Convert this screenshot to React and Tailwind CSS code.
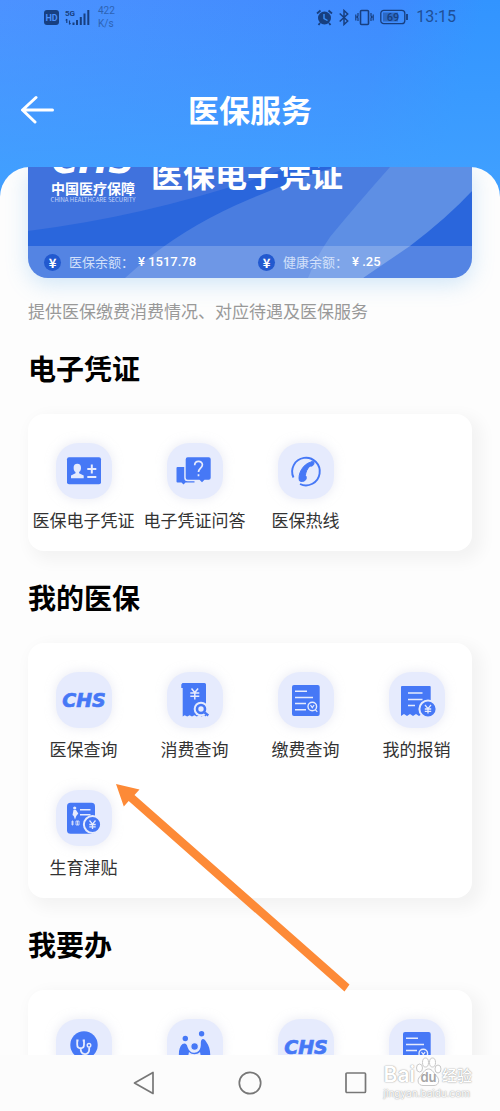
import React from "react";

const BLUE = "#4678f6";
const PALE = "#e6ebfd";

function Chs() {
  return (
    <text x="28" y="35" textAnchor="middle" fontSize="19" fontWeight="700" fontStyle="italic" fontFamily="DejaVu Sans" fill={BLUE} stroke={BLUE} strokeWidth=".7">CHS</text>
  );
}

function Coin({ cx, cy }) {
  return (
    <>
      <circle cx={cx} cy={cy} r="8.6" fill={BLUE} stroke={PALE} strokeWidth="2" />
      <path d={`M${cx - 3} ${cy - 4}l3 3.6l3-3.6M${cx} ${cy - 0.4}v5M${cx - 3.2} ${cy}h6.4M${cx - 3.2} ${cy + 2.4}h6.4`} stroke={PALE} strokeWidth="1.3" fill="none" />
    </>
  );
}

const icons = {
  idcard: (
    <>
      <rect x="11" y="14.3" width="34" height="27" rx="2" fill={BLUE} />
      <ellipse cx="21.3" cy="25" rx="3.7" ry="4.2" fill={PALE} />
      <path d="M19.5 27h3.6v3.2l4.6 2.3v2.7H15v-2.7l4.5-2.3z" fill={PALE} />
      <path d="M31.3 26h9M35.8 21.6v8.8M31.3 34h9" stroke={PALE} strokeWidth="2" />
    </>
  ),
  question: (
    <>
      <path d="M10.500 24h10v13.500h7v2h-9l-2 2-2-2h-4a1 1 0 0 1-1-1V25a1 1 0 0 1 1-1z" fill={BLUE} />
      <path d="M20.700 14.300h21a2 2 0 0 1 2 2v18.400a2 2 0 0 1-2 2h-4.200l-2.500 2.500-2.500-2.500H20.700a2 2 0 0 1-2-2V16.300a2 2 0 0 1 2-2z" fill={BLUE} stroke={PALE} strokeWidth="3" paintOrder="stroke" />
      <path d="M27.700 22.300c0-5.200 7.700-5 7.700-.6 0 3.400-3.900 3.300-3.900 7.300M31.500 31.200v2" stroke={PALE} strokeWidth="1.700" fill="none" />
    </>
  ),
  phone: (
    <>
      <path d="M15.500 34.500A13.800 13.800 0 1 1 22 41" stroke={BLUE} strokeWidth="1.900" fill="none" />
      <path d="M32.500 19.200c1.500-1.800 3.900-1.100 3.500 1.200-.3 2-2.200 3.300-4 2.600-2.800 2.700-4.300 6-4.600 9.600 1.200.9 1.200 3 .2 4.300-1.500 1.700-4.900 2.200-6.200.8-1.900-6.500 3.500-16.500 11.100-18.500z" fill={BLUE} stroke={BLUE} strokeWidth="1" strokeLinejoin="round" />
    </>
  ),
  chs: <Chs />,
  receipt: (
    <>
      <path d="M15.500 11h22a1.500 1.500 0 0 1 1.500 1.500V44.500l-2-1.300-2.400 1.300-2.400-1.300-2.400 1.300-2.400-1.300-2.400 1.300-2.400-1.300-2.400 1.300-2.500-1.300-2 1.300V16H14.300v-3.500z" fill={BLUE} />
      <path d="M24.500 16.500l3.300 4 3.300-4M27.800 20.500v7M23.300 21h9M23.300 24.300h9" stroke={PALE} strokeWidth="1.500" fill="none" />
      <circle cx="34" cy="37" r="7.300" fill={PALE} />
      <circle cx="34" cy="37" r="4" fill="none" stroke={BLUE} strokeWidth="2.600" />
      <path d="M37.500 40.500l3.800 3" stroke={BLUE} strokeWidth="2.400" />
    </>
  ),
  bill: (
    <>
      <rect x="14" y="13" width="27.700" height="31" rx="2" fill={BLUE} />
      <path d="M17 19.300h12M17 25.500h18M17 31.500h11M17 37.700h11" stroke={PALE} strokeWidth="1.400" />
      <circle cx="34.300" cy="34.500" r="4.300" fill="none" stroke={PALE} strokeWidth="1.400" />
      <path d="M32.500 33l1.800 2.600 1.800-2.600M37.300 37.600l2 2.200" stroke={PALE} strokeWidth="1.200" fill="none" />
    </>
  ),
  refund: (
    <>
      <path d="M16 14h24.700a1 1 0 0 1 1 1v29l-2.700-2-3 2-3-2-3 2-3-2-3 2-3-2-3 2-3-2-3 2V15a1 1 0 0 1 1-1z" fill={BLUE} />
      <path d="M19 21h14.500M19 27.500h14.500M19 33.500h7" stroke={PALE} strokeWidth="1.700" />
      <Coin cx={39} cy={37} />
    </>
  ),
  allowance: (
    <>
      <rect x="11" y="12.700" width="28" height="31" rx="3.500" fill={BLUE} />
      <circle cx="18.700" cy="18" r="1.600" fill={PALE} />
      <path d="M17.500 20h2.500l2.300 3.500-2 2.500-1.300 3.500-1.300-3.500-1.200-1z" fill={PALE} />
      <path d="M24 19.800h10.500M24 24.700h10.500" stroke={PALE} strokeWidth="1.500" />
      <path d="M15 32h3M16.500 30.500v5M15 34h3M20 31h3v4h-3zM21.500 31v4" stroke={PALE} strokeWidth=".8" fill="none" />
      <Coin cx={36.500} cy={34.500} />
    </>
  ),
  doctor: (
    <>
      <circle cx="28" cy="26" r="13.700" fill={BLUE} />
      <path d="M22.500 21.500h-1.300v4c0 5 6.800 5 6.800 0v-4h-1.300M24.600 29.300c0 8 8.600 7 8.600 1.500v-2.500" stroke={PALE} strokeWidth="1.800" fill="none" />
      <circle cx="33" cy="26.300" r="1.800" fill="none" stroke={PALE} strokeWidth="1.400" />
    </>
  ),
  family: (
    <>
      <circle cx="18.300" cy="19.500" r="2.700" fill={BLUE} />
      <circle cx="34.600" cy="14.700" r="2.700" fill={BLUE} />
      <path d="M15.500 25c2.500-1.500 4.500 0 5 3 1.500 4.500 4.500 6.500 8 5.500 4-1 5.500-4 5.300-9.500 0-5 3.500-5 5.500-1 3 4 4 8 4 15H34l-1-5c-3 3-8 3-11 0l-1 5h-9c-.500-6 .500-10.500 3.500-13z" fill={BLUE} />
      <circle cx="27.600" cy="27.500" r="3.800" fill={BLUE} stroke={PALE} strokeWidth="1.200" />
    </>
  ),
};

function Tile({ icon, label, name }) {
  return (
    <button type="button" aria-label={name} className="flex flex-col items-center">
      <span className="size-14 rounded-[22px] bg-[#e6ebfd] shadow-[0_0_8px_2px_rgba(225,228,240,0.5)]">
        <svg viewBox="0 0 56 56" className="size-14" aria-hidden="true">{icons[icon]}</svg>
      </span>
      <span className="mt-[9px] h-6 text-[17px] leading-6 whitespace-nowrap text-[#333]">{label}</span>
    </button>
  );
}

function Section({ title, tiles, children }) {
  return (
    <section className="relative">
      <h2 className="mt-7 mb-7 text-[28px] leading-9 font-bold text-black">{title}</h2>
      <div className="grid grid-cols-4 gap-y-[29px] rounded-2xl bg-white pt-[29px] pb-[19px] shadow-[6px_6px_16px_4px_rgba(0,0,0,0.045)]">
        {tiles.map((t, i) => <Tile key={i} {...t} />)}
      </div>
      {children}
    </section>
  );
}

function StatusBar() {
  return (
    <div className="flex h-[34px] items-center justify-between pr-11 pl-11 text-[#173f80]">
      <div className="flex items-center gap-1.5">
        <svg viewBox="0 0 15 15" className="size-[15px]" aria-hidden="true">
          <rect width="15" height="15" rx="3" fill="currentColor" />
          <text x="7.500" y="11" textAnchor="middle" fontSize="9" fontWeight="700" fontFamily="Roboto" fill="#4a90fb">HD</text>
        </svg>
        <svg viewBox="0 0 25 17" className="h-[17px] w-[25px]" aria-hidden="true">
          <text x="0" y="7" fontSize="8" fontWeight="700" fontFamily="Roboto" fill="currentColor">5G</text>
          <path d="M1.800 10v4M4.500 11.500v4M.8 11.500l1-1.500M5.500 14l-1 1.500" stroke="currentColor" strokeWidth="1.200" fill="none" />
          <path d="M8.500 13.500V16M12 11v5M15.800 8v8M19.500 4.500V16M23.300 1v15" stroke="currentColor" strokeWidth="2" />
        </svg>
        <div className="ml-0.5 font-[Roboto] text-[10px] leading-[13px] text-[#2d63b4]">
          <div>422</div>
          <div>K/s</div>
        </div>
      </div>
      <div className="flex items-center gap-1.5">
        <svg viewBox="0 0 17 17" className="size-[17px]" aria-hidden="true">
          <circle cx="8.500" cy="9" r="6.500" fill="currentColor" />
          <path d="M1 4.500L4.500 1.500M16 4.500L12.500 1.500M4 14l-1.500 2M13 14l1.500 2" stroke="currentColor" strokeWidth="1.800" />
          <path d="M8 5v4.500l3.500 2" stroke="#3a92fb" strokeWidth="1.400" fill="none" />
        </svg>
        <svg viewBox="0 0 10 17" className="h-[17px] w-2.5" aria-hidden="true">
          <path d="M.7 4.500l8 7.500L5 15.500v-14L8.700 5 .7 12.500" stroke="currentColor" strokeWidth="1.500" fill="none" />
        </svg>
        <svg viewBox="0 0 19 17" className="h-[17px] w-[19px]" aria-hidden="true">
          <rect x="5.500" y="1.500" width="8" height="14" rx="1" stroke="currentColor" strokeWidth="1.600" fill="none" />
          <path d="M3 4v3l-1 1 1 1v3M.8 5.500v6M16 4v3l1 1-1 1v3M18.200 5.500v6" stroke="currentColor" strokeWidth="1.200" fill="none" />
        </svg>
        <svg viewBox="0 0 28 16" className="h-4 w-7" aria-hidden="true">
          <rect x=".8" y="1.300" width="24" height="13.400" rx="3" stroke="currentColor" strokeWidth="1.300" fill="none" />
          <rect x="3" y="3.500" width="15" height="9" fill="currentColor" opacity=".45" />
          <path d="M27 5v6" stroke="currentColor" strokeWidth="1.800" />
          <text x="13" y="12" textAnchor="middle" fontSize="11" fontFamily="Roboto" fontWeight="500" fill="currentColor">69</text>
        </svg>
        <time className="ml-0.5 font-[Roboto] text-base leading-5 text-[#1f4f96]">13:15</time>
      </div>
    </div>
  );
}

function Balance({ label, value }) {
  return (
    <div className="flex w-[214px] items-center">
      <span className="mr-2 flex size-[17px] items-center justify-center rounded-full bg-[#2259cf] text-[13px] leading-none font-bold text-white">¥</span>
      <span className="text-[13px] text-[#d3e0fa]">{label}</span>
      <span className="ml-1 font-[Roboto,'Noto_Sans_CJK_SC'] text-[13px] font-medium text-white">¥ {value}</span>
    </div>
  );
}

function InsuranceCard() {
  return (
    <div className="relative overflow-hidden rounded-b-[20px] bg-[#2a66dc] text-white">
      <svg viewBox="0 0 444 111" preserveAspectRatio="none" className="absolute inset-0 size-full" aria-hidden="true">
        <path d="M0 0H262Q130 48 0 64z" fill="#4072dd" />
        <path d="M97 111Q150 62 222 32T310 0H444V24L335 111z" fill="#4a7de0" />
        <path d="M362 0Q330 36 302 70Q287 92 280 111H335Q360 94 382 79Q420 50 444 24V0z" fill="#5e8fe4" />
      </svg>
      <div className="relative -mt-6 flex h-[103px] pl-6">
        <div className="flex w-[82px] flex-col items-center">
          <span className="font-['DejaVu_Sans'] text-[36px] leading-9 font-bold italic">CHS</span>
          <span className="text-[14px] leading-[18px] font-bold whitespace-nowrap">中国医疗保障</span>
          <span className="text-[6px] leading-[6px] whitespace-nowrap text-[#c5d6f8]">CHINA HEALTHCARE SECURITY</span>
        </div>
        <span className="ml-[17px] text-[32px] leading-[60px] font-bold whitespace-nowrap">医保电子凭证</span>
      </div>
      <div className="relative flex h-8 items-center bg-white/20 pl-4">
        <Balance label="医保余额：" value="1517.78" />
        <Balance label="健康余额：" value=".25" />
      </div>
    </div>
  );
}

function Arrow() {
  return (
    <svg viewBox="116 784 234 208" className="pointer-events-none absolute top-[205px] left-[88px] z-10 h-[208px] w-[234px]" aria-hidden="true">
      <path d="M116 784L139.500 789.500L134.500 795L349.500 984.500L344.500 991.500L128.700 801L123.800 806.500z" fill="#fd8a37" />
    </svg>
  );
}

function Watermark() {
  return (
    <div className="pointer-events-none absolute right-7 bottom-3 z-20 flex flex-col text-white [text-shadow:0_0_1px_#999,0_0_2px_#bbb]">
      <div className="flex h-[30px] items-end">
        <span className="font-[Inter] text-[21px] leading-6 font-semibold">Bai</span>
        <span className="relative flex h-[30px] w-[27px] items-end justify-center">
          <svg viewBox="0 0 27 30" className="absolute inset-0 size-full" aria-hidden="true">
            <g fill="#fff" stroke="#c8c8c8" strokeWidth="1">
              <ellipse cx="4.500" cy="11" rx="3" ry="4" />
              <ellipse cx="10.500" cy="5.500" rx="3" ry="4.500" />
              <ellipse cx="17.500" cy="5.500" rx="3" ry="4.500" />
              <ellipse cx="23" cy="12" rx="3" ry="4" />
              <path d="M13.500 12c4 0 5 4 8 7 4 4 2 9.500-2.500 9.500H8C3 28.500 1.500 23 5 19.500c3-3 4.500-7.500 8.500-7.500z" />
            </g>
          </svg>
          <span className="relative font-[Inter] text-[13px] leading-5 font-semibold text-[#a5a5a5] [text-shadow:none]">du</span>
        </span>
        <span className="text-[15px] leading-6 font-medium">经验</span>
      </div>
      <span className="font-[Inter] text-[10px] leading-3">jingyan.baidu.com</span>
    </div>
  );
}

export default function App() {
  return (
    <div className="relative flex h-screen flex-col overflow-hidden bg-[#fdfdfd] font-['Noto_Sans_CJK_SC',sans-serif]">
      <div className="flex min-h-0 flex-1 flex-col bg-[linear-gradient(180deg,rgba(64,160,255,0)_0,rgba(64,160,255,0.9)_170px),linear-gradient(105deg,#4c92ff_0%,#3f8afe_50%,#3294ff_62%,#3294ff_100%)]">
        <StatusBar />
        <header className="grid h-[133px] grid-cols-[80px_1fr_80px] items-center pt-4 text-white">
          <button type="button" aria-label="返回" className="flex pl-5">
            <svg viewBox="0 0 34 30" className="h-[30px] w-[34px]" aria-hidden="true">
              <path d="M32.500 16H3M16 3.500L2.500 16L15 28" fill="none" stroke="currentColor" strokeWidth="3" strokeLinecap="round" strokeLinejoin="round" />
            </svg>
          </button>
          <h1 className="text-center text-[31px] leading-10 font-bold">医保服务</h1>
        </header>
        <main className="min-h-0 flex-1 overflow-hidden rounded-t-[30px] bg-[#fdfdfd] px-7">
          <div className="rounded-b-[20px] shadow-[0_6px_22px_rgba(90,170,235,0.28)]">
            <InsuranceCard />
          </div>
          <p className="mt-[22px] text-[17px] leading-[22px] whitespace-nowrap text-[#999]">提供医保缴费消费情况、对应待遇及医保服务</p>
          <Section
            title="电子凭证"
            tiles={[
              { icon: "idcard", label: "医保电子凭证" },
              { icon: "question", label: "电子凭证问答" },
              { icon: "phone", label: "医保热线" },
            ]}
          />
          <Section
            title="我的医保"
            tiles={[
              { icon: "chs", label: "医保查询" },
              { icon: "receipt", label: "消费查询" },
              { icon: "bill", label: "缴费查询" },
              { icon: "refund", label: "我的报销" },
              { icon: "allowance", label: "生育津贴" },
            ]}
          >
            <Arrow />
          </Section>
          <Section
            title="我要办"
            tiles={[
              { icon: "doctor", name: "就医" },
              { icon: "family", name: "家庭" },
              { icon: "chs", name: "医保" },
              { icon: "bill", name: "账单" },
            ]}
          />
        </main>
      </div>
      <nav className="flex h-14 shrink-0 items-center justify-center gap-[82px] bg-[#fcfcfc] text-[#777]">
        <button type="button" aria-label="返回上一页">
          <svg viewBox="0 0 24 24" className="size-6" aria-hidden="true"><path d="M21 1.500v21L2.500 12z" fill="none" stroke="currentColor" strokeWidth="1.700" strokeLinejoin="round" /></svg>
        </button>
        <button type="button" aria-label="主页">
          <svg viewBox="0 0 24 24" className="size-6" aria-hidden="true"><circle cx="12" cy="12" r="10.700" fill="none" stroke="currentColor" strokeWidth="1.700" /></svg>
        </button>
        <button type="button" aria-label="最近任务">
          <svg viewBox="0 0 24 24" className="size-6" aria-hidden="true"><rect x="2" y="2" width="19.500" height="19.500" rx="1" fill="none" stroke="currentColor" strokeWidth="1.700" /></svg>
        </button>
      </nav>
      <Watermark />
    </div>
  );
}
